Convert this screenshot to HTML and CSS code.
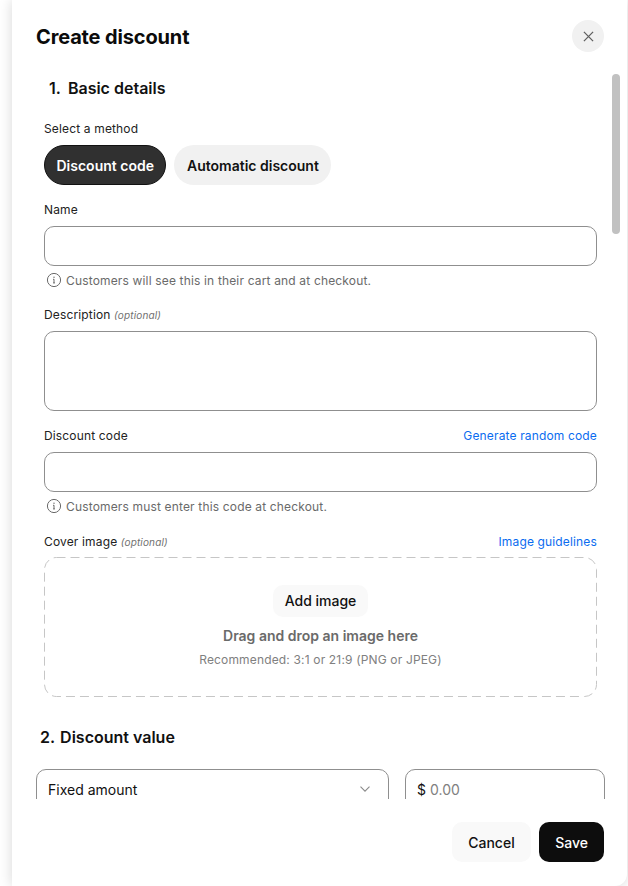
FILE: index.html
```html
<!DOCTYPE html>
<html lang="en">
<head>
<meta charset="utf-8">
<title>Create discount</title>
<link rel="stylesheet" href="styles.css">
</head>
<body>
<div class="panel">
  <header class="head">
    <h1 class="title">Create discount</h1>
    <button class="close" aria-label="Close">
      <svg width="11" height="11" viewBox="0 0 12 12" fill="none"><path d="M1 1l10 10M11 1L1 11" stroke="#5f5f5f" stroke-width="1.4"/></svg>
    </button>
  </header>
  <div class="scroll">
    <div class="thumb"></div>
    <section class="basic">
      <h2 class="h2 h2-first"><span class="num">1.</span> Basic details</h2>
      <div class="label method-label">Select a method</div>
      <div class="pills">
        <span class="pill pill-on">Discount code</span>
        <span class="pill">Automatic discount</span>
      </div>
      <div class="label name-label">Name</div>
      <div class="input"></div>
      <div class="hint">
        <svg width="16" height="16" viewBox="0 0 16 16" fill="none"><circle cx="8" cy="8" r="6.6" stroke="#6a6a6a"/><path d="M8 7.2v3.6M7 7.3h1M7 10.9h2" stroke="#6a6a6a"/><circle cx="8" cy="5.2" r=".7" fill="#6a6a6a"/></svg>
        <span>Customers will see this in their cart and at checkout.</span>
      </div>
      <div class="label desc-label">Description <em class="opt">(optional)</em></div>
      <div class="input area"></div>
      <div class="label-row code-label">
        <div class="label">Discount code</div>
        <a class="link">Generate random code</a>
      </div>
      <div class="input"></div>
      <div class="hint">
        <svg width="16" height="16" viewBox="0 0 16 16" fill="none"><circle cx="8" cy="8" r="6.6" stroke="#6a6a6a"/><path d="M8 7.2v3.6M7 7.3h1M7 10.9h2" stroke="#6a6a6a"/><circle cx="8" cy="5.2" r=".7" fill="#6a6a6a"/></svg>
        <span>Customers must enter this code at checkout.</span>
      </div>
      <div class="label-row cover-label">
        <div class="label">Cover image <em class="opt">(optional)</em></div>
        <a class="link">Image guidelines</a>
      </div>
      <div class="drop">
        <svg class="dash" width="100%" height="100%" fill="none"><rect x=".5" y=".5" width="552" height="139" rx="12" stroke="#c6c6c6" stroke-dasharray="9 5"/></svg>
        <span class="add">Add image</span>
        <div class="drag">Drag and drop an image here</div>
        <div class="rec">Recommended: 3:1 or 21:9 (PNG or JPEG)</div>
      </div>
    </section>
    <h2 class="h2 h2-second"><span class="num2">2.</span> Discount value</h2>
    <div class="value-row">
      <div class="field select">
        <span>Fixed amount</span>
        <svg width="10" height="6" viewBox="0 0 10 6" fill="none"><path d="M.5.7L5 5.2 9.5.7" stroke="#8a8a8a" stroke-width="1.1"/></svg>
      </div>
      <div class="field amount"><span class="cur">$</span> <span class="ph">0.00</span></div>
    </div>
  </div>
  <footer class="foot">
    <button class="btn cancel">Cancel</button>
    <button class="btn save">Save</button>
  </footer>
</div>
</body>
</html>
```
FILE: styles.css
```css
* { box-sizing: border-box; }
html, body { margin: 0; height: 100%; }
body {
  background: #fff;
  font-family: Inter, "Liberation Sans", sans-serif;
  color: #111;
  overflow: hidden;
  padding-left: 12px;
}
.panel {
  width: 615px;
  height: 886px;
  background: #fff;
  border-bottom-right-radius: 12px;
  box-shadow: 0 0 14px rgba(0,0,0,.16);
  display: flex;
  flex-direction: column;
}
.head {
  height: 74px;
  flex: none;
  padding: 20px 23px 0 24px;
  display: flex;
  justify-content: space-between;
  align-items: flex-start;
}
.title { margin: 0; font-size: 20px; line-height: 35px; font-weight: 700; letter-spacing: -.14px; color: #0b0b0b; }
.close {
  width: 32px; height: 32px; border: 0; border-radius: 50%;
  background: #f1f1f1; padding: 0;
  display: flex; align-items: center; justify-content: center;
}
.scroll { position: relative; height: 725px; flex: none; overflow: hidden; padding: 0 22px 0 24px; }
.thumb { position: absolute; right: 7px; top: 0; width: 8px; height: 160px; border-radius: 4px; background: #c1c1c1; }
.basic { padding: 0 8px; }
.h2 { margin: 0; font-size: 16px; line-height: 28px; font-weight: 600; }
.h2-first { margin-left: 5px; }
.num { margin-right: 3px; }
.num2 { margin-right: 1px; }
.h2-second { margin-top: 26px; margin-left: 4px; }
.label { font-size: 12px; line-height: 16px; color: #222; letter-spacing: .15px; }
.method-label { margin-top: 19px; }
.pills { display: flex; gap: 8px; margin-top: 8px; }
.pill {
  height: 40px; padding: 1px 12.5px 0; border-radius: 20px; background: #f1f1f1;
  font-size: 14px; font-weight: 600; line-height: 39px;
}
.pill-on { background: #303030; color: #fff; border: 1px solid #111; line-height: 37px; padding: 1px 11.5px 0; }
.name-label { margin-top: 17px; }
.input { height: 40px; margin-top: 8px; border: 1px solid #8f8f8f; border-radius: 10px; }
.area { height: 80px; }
.hint { display: flex; align-items: center; gap: 4px; height: 16px; margin-top: 6px; padding-left: 2px; font-size: 12px; color: #6a6a6a; letter-spacing: .16px; }
.desc-label { margin-top: 19px; }
.opt { font-size: 10px; color: #6f6f6f; }
.label-row { display: flex; justify-content: space-between; align-items: center; }
.code-label { margin-top: 17px; }
.cover-label { margin-top: 20px; }
.link { font-size: 12px; line-height: 16px; color: #0a6cf0; letter-spacing: .15px; }
.drop {
  position: relative;
  height: 140px; margin-top: 7px; border-radius: 12px;
  display: flex; flex-direction: column; align-items: center; padding-top: 28px;
}
.dash { position: absolute; left: 0; top: 0; }
.add { height: 32px; padding: 0 12px; border-radius: 10px; background: #f9f9f9; font-size: 14px; font-weight: 500; line-height: 32px; }
.drag { margin-top: 9px; font-size: 14px; line-height: 20px; font-weight: 600; color: #6a6a6a; }
.rec { margin-top: 6px; font-size: 12px; line-height: 16px; color: #808080; letter-spacing: .16px; }
.value-row { display: flex; gap: 16px; margin-top: 18px; }
.field { height: 40px; border: 1px solid #8f8f8f; border-radius: 10px; font-size: 14px; display: flex; align-items: center; padding: 0 12px 0 11px; flex: none; }
.select { width: 353px; justify-content: space-between; padding-right: 18px; }
.amount { width: 200px; gap: 4px; }
.ph { color: #808080; }
.foot {
  flex: 1; display: flex; justify-content: flex-end; align-items: flex-start;
  gap: 8px; padding: 23px 23px 0 0;
}
.btn { height: 40px; border: 0; border-radius: 10px; font-family: inherit; font-size: 14px; font-weight: 500; padding: 0 16px; }
.cancel { background: #f9f9f9; color: #111; padding: 0 16.5px; }
.save { background: #0d0d0d; color: #fff; }
```
